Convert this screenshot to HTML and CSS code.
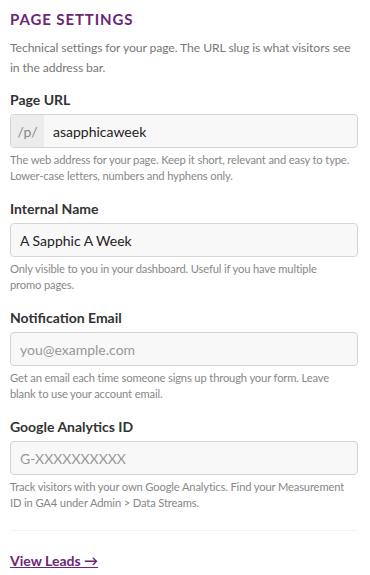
FILE: index.html
```html
<!DOCTYPE html>
<html lang="en">
<head>
  <meta charset="UTF-8">
  <title>Page Settings</title>
  <link rel="stylesheet" href="styles.css">
</head>
<body>

  <div class="panel">
    <h2 class="panel-title">PAGE SETTINGS</h2>
    <p class="panel-desc">Technical settings for your page. The URL slug is what visitors see in the address bar.</p>

    <div class="field">
      <label class="field-label">Page URL</label>
      <div class="input-group">
        <span class="input-prefix">/p/</span>
        <input class="input" type="text" value="asapphicaweek">
      </div>
      <p class="field-help">The web address for your page. Keep it short, relevant and easy to type. Lower-case letters, numbers and hyphens only.</p>
    </div>

    <div class="field">
      <label class="field-label">Internal Name</label>
      <input class="input input-box" type="text" value="A Sapphic A Week">
      <p class="field-help">Only visible to you in your dashboard. Useful if you have multiple<br>promo pages.</p>
    </div>

    <div class="field">
      <label class="field-label">Notification Email</label>
      <input class="input input-box" type="email" placeholder="you@example.com">
      <p class="field-help">Get an email each time someone signs up through your form. Leave<br>blank to use your account email.</p>
    </div>

    <div class="field">
      <label class="field-label">Google Analytics ID</label>
      <input class="input input-box" type="text" placeholder="G-XXXXXXXXXX">
      <p class="field-help">Track visitors with your own Google Analytics. Find your Measurement ID in GA4 under Admin &gt; Data Streams.</p>
    </div>

    <hr class="divider">

    <a class="leads-link" href="#">View Leads →</a>
  </div>

</body>
</html>
```

FILE: styles.css
```css
body {
  margin: 0;
  font-family: Lato, "Noto Sans", sans-serif;
  background: #fff;
  color: #333;
}

.panel {
  padding: 10px 12px 0 10px;
}

.panel-title {
  margin: 0;
  font-size: 15px;
  font-weight: 700;
  color: #6b2776;
  letter-spacing: 0.9px;
  line-height: 18px;
}

.panel-desc {
  margin: 10px 0 0;
  font-size: 12.2px;
  letter-spacing: -0.1px;
  line-height: 20px;
  color: #777;
}

.field {
  margin-top: 12px;
}

.field + .field {
  margin-top: 15px;
}

.field-label {
  display: block;
  font-size: 14px;
  font-weight: 700;
  color: #333;
  line-height: 20px;
  margin-bottom: 4px;
}

.input-group {
  display: flex;
  height: 34px;
  border: 1px solid #d4d4d4;
  border-radius: 4px;
  background: #f8f8f8;
  overflow: hidden;
  box-sizing: border-box;
}

.input-prefix {
  width: 33px;
  background: #ececec;
  color: #888;
  font-size: 14px;
  display: flex;
  align-items: center;
  justify-content: center;
}

.input {
  flex: 1;
  border: none;
  background: transparent;
  font-family: inherit;
  font-size: 14px;
  color: #222;
  padding: 0 9px;
  outline: none;
}

.input-box {
  display: block;
  width: 100%;
  height: 34px;
  box-sizing: border-box;
  border: 1px solid #d4d4d4;
  border-radius: 4px;
  background: #f8f8f8;
}

.input::placeholder {
  color: #999;
}

.field-help {
  margin: 4px 0 0;
  font-size: 11.2px;
  letter-spacing: -0.15px;
  line-height: 16px;
  color: #888;
}

.divider {
  border: none;
  border-top: 1px solid #f3f3f3;
  margin: 19px 0 0;
}

.leads-link {
  display: inline-block;
  margin-top: 21px;
  font-size: 14px;
  font-weight: 700;
  color: #6b2776;
  text-decoration: underline;
}
```
